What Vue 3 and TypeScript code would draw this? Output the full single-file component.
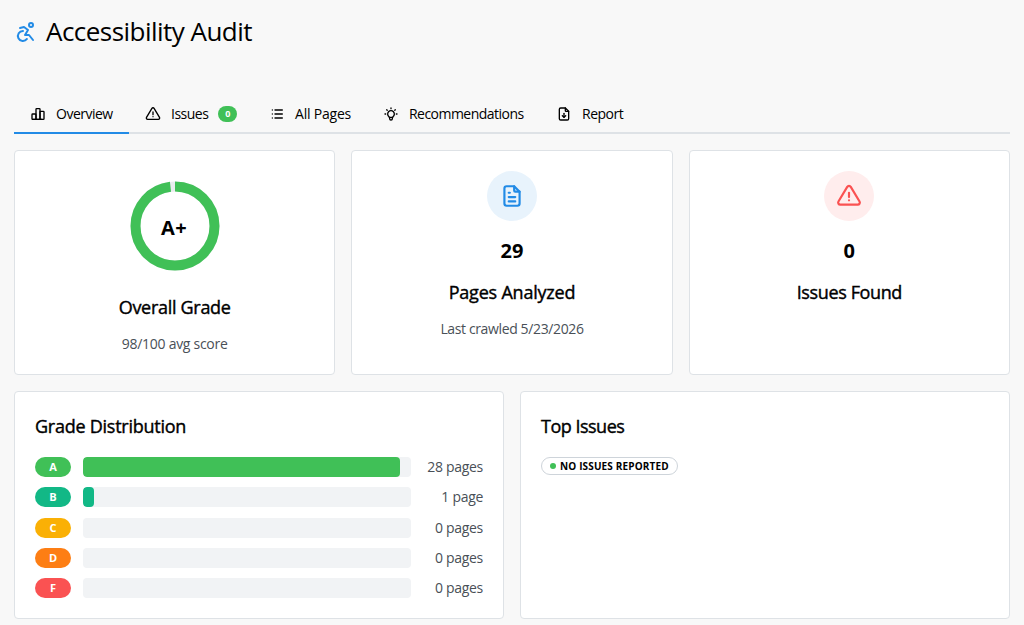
<script setup lang="ts">
interface Tab {
  key: string
  label: string
  paths: string[]
  badge?: string
}

interface GradeRow {
  grade: string
  percent: number
  count: string
}

const alertPaths = [
  'M12 9v4',
  'M10.363 3.591l-8.106 13.534a1.914 1.914 0 0 0 1.636 2.871h16.214a1.914 1.914 0 0 0 1.636 -2.87l-8.106 -13.536a1.914 1.914 0 0 0 -3.274 0z',
  'M12 16h.01',
]
const filePaths = [
  'M14 3v4a1 1 0 0 0 1 1h4',
  'M17 21h-10a2 2 0 0 1 -2 -2v-14a2 2 0 0 1 2 -2h7l5 5v11a2 2 0 0 1 -2 2z',
]

const tabs: Tab[] = [
  {
    key: 'overview',
    label: 'Overview',
    paths: [
      'M3 13a1 1 0 0 1 1 -1h4a1 1 0 0 1 1 1v6a1 1 0 0 1 -1 1h-4a1 1 0 0 1 -1 -1z',
      'M15 9a1 1 0 0 1 1 -1h4a1 1 0 0 1 1 1v10a1 1 0 0 1 -1 1h-4a1 1 0 0 1 -1 -1z',
      'M9 5a1 1 0 0 1 1 -1h4a1 1 0 0 1 1 1v14a1 1 0 0 1 -1 1h-4a1 1 0 0 1 -1 -1z',
      'M4 20h14',
    ],
  },
  { key: 'issues', label: 'Issues', paths: alertPaths, badge: '0' },
  {
    key: 'pages',
    label: 'All Pages',
    paths: ['M9 6h11', 'M9 12h11', 'M9 18h11', 'M5 6v.01', 'M5 12v.01', 'M5 18v.01'],
  },
  {
    key: 'recommendations',
    label: 'Recommendations',
    paths: [
      'M3 12h1m8 -9v1m8 8h1m-15.4 -6.4l.7 .7m12.1 -.7l-.7 .7',
      'M9 16a5 5 0 1 1 6 0a3.5 3.5 0 0 0 -1 3a2 2 0 0 1 -4 0a3.5 3.5 0 0 0 -1 -3',
      'M9.7 17h4.6',
    ],
  },
  { key: 'report', label: 'Report', paths: [...filePaths, 'M12 17v-6', 'M9.5 14.5l2.5 2.5l2.5 -2.5'] },
]
const activeTab = 'overview'

const score = 98
const radius = 39.5
const circumference = 2 * Math.PI * radius
const scoreLength = (circumference * score) / 100

const grades: GradeRow[] = [
  { grade: 'A', percent: 96.55, count: '28 pages' },
  { grade: 'B', percent: 3.45, count: '1 page' },
  { grade: 'C', percent: 0, count: '0 pages' },
  { grade: 'D', percent: 0, count: '0 pages' },
  { grade: 'F', percent: 0, count: '0 pages' },
]
</script>

<template>
  <main class="page">
    <header class="header">
      <svg class="icon logo" viewBox="0 0 24 24">
        <circle cx="17" cy="5" r="2" />
        <path d="M9 11a5 5 0 1 0 3.95 7.95" />
        <path d="M19 20l-4 -5h-4l3 -5l-4 -3l-4 1" />
      </svg>
      <h1 class="title">Accessibility Audit</h1>
    </header>

    <nav class="tabs">
      <button
        v-for="tab in tabs"
        :key="tab.key"
        type="button"
        class="tab"
        :class="[`tab-${tab.key}`, { active: tab.key === activeTab }]"
      >
        <svg class="icon" viewBox="0 0 24 24">
          <path v-for="d in tab.paths" :key="d" :d="d" />
        </svg>
        <span class="tab-label">{{ tab.label }}</span>
        <span v-if="tab.badge" class="tab-badge">{{ tab.badge }}</span>
      </button>
    </nav>

    <section class="stats">
      <article class="card stat">
        <div class="ring">
          <svg viewBox="0 0 100 100">
            <circle class="ring-track" cx="50" cy="50" :r="radius" />
            <circle
              class="ring-value"
              cx="50"
              cy="50"
              :r="radius"
              transform="rotate(-90 50 50)"
              :stroke-dasharray="`${scoreLength} ${circumference}`"
            />
          </svg>
          <span class="ring-label">A+</span>
        </div>
        <h2 class="stat-name">Overall Grade</h2>
        <p class="stat-note">98/100 avg score</p>
      </article>

      <article class="card stat">
        <div class="bubble blue">
          <svg class="icon" viewBox="0 0 24 24">
            <path v-for="d in filePaths" :key="d" :d="d" />
            <path d="M9 9h1" />
            <path d="M9 13h6" />
            <path d="M9 17h6" />
          </svg>
        </div>
        <strong class="stat-value">29</strong>
        <h2 class="stat-name analyzed">Pages Analyzed</h2>
        <p class="stat-note crawled">Last crawled 5/23/2026</p>
      </article>

      <article class="card stat">
        <div class="bubble red">
          <svg class="icon" viewBox="0 0 24 24">
            <path v-for="d in alertPaths" :key="d" :d="d" />
          </svg>
        </div>
        <strong class="stat-value">0</strong>
        <h2 class="stat-name found">Issues Found</h2>
      </article>
    </section>

    <section class="details">
      <article class="card panel">
        <h2 class="panel-title">Grade Distribution</h2>
        <ul class="grades">
          <li v-for="row in grades" :key="row.grade" class="grade-row" :class="`grade-${row.grade}`">
            <span class="grade-badge">{{ row.grade }}</span>
            <span class="bar"><span class="bar-fill" :style="{ width: `${row.percent}%` }" /></span>
            <span class="count">{{ row.count }}</span>
          </li>
        </ul>
      </article>

      <article class="card panel">
        <h2 class="panel-title top">Top Issues</h2>
        <span class="status"><i class="dot" /><span>No issues reported</span></span>
      </article>
    </section>
  </main>
</template>

<style>
body {
  margin: 0;
  background: #f8f8f8;
}
</style>

<style scoped>
.page {
  box-sizing: border-box;
  height: 625px;
  padding: 14px 14px 0;
  overflow: hidden;
  background: #f8f8f8;
  color: #000;
  font-family: 'Open Sans', 'Noto Sans', sans-serif;
}
h1,
h2,
p,
ul {
  margin: 0;
  padding: 0;
}
.icon {
  flex: none;
  fill: none;
  stroke: currentColor;
  stroke-width: 2;
  stroke-linecap: round;
  stroke-linejoin: round;
}
.header {
  display: flex;
  align-items: center;
  height: 36px;
}
.logo {
  width: 24px;
  height: 24px;
  margin-right: 8px;
  color: #228be6;
}
.title {
  font-size: 26px;
  line-height: 34px;
  height: 36px;
  font-weight: 400;
  letter-spacing: -0.53px;
  white-space: nowrap;
}
.tabs {
  display: flex;
  height: 38px;
  margin-top: 44px;
  border-bottom: 2px solid #dee2e6;
}
.tab {
  display: flex;
  align-items: center;
  box-sizing: border-box;
  height: 40px;
  padding: 2px 0 0 16px;
  border: 0;
  border-bottom: 2px solid transparent;
  background: none;
  color: #000;
  font: 400 14px/20px 'Open Sans', 'Noto Sans', sans-serif;
  white-space: nowrap;
}
.tab .icon {
  width: 16px;
  height: 16px;
  margin-right: 10px;
}
.tab.active {
  border-bottom-color: #228be6;
}
.tab-overview { width: 115px; letter-spacing: -0.5px; }
.tab-issues { width: 124px; letter-spacing: -0.5px; }
.tab-pages { width: 114px; letter-spacing: -0.2px; }
.tab-recommendations { width: 173px; letter-spacing: -0.53px; }
.tab-report { width: 99px; letter-spacing: -0.5px; }
.tab-badge {
  width: 19px;
  height: 16px;
  margin-left: 10px;
  border-radius: 8px;
  background: #40c057;
  color: #fff;
  font-size: 9px;
  line-height: 16px;
  font-weight: 700;
  letter-spacing: 0;
  text-align: center;
}
.stats {
  display: grid;
  grid-template-columns: repeat(3, 1fr);
  gap: 16px;
  height: 225px;
  margin-top: 16px;
}
.details {
  display: grid;
  grid-template-columns: repeat(2, 1fr);
  gap: 16px;
  height: 228px;
  margin-top: 16px;
}
.card {
  box-sizing: border-box;
  padding: 20px;
  border: 1px solid #dee2e6;
  border-radius: 4px;
  background: #fff;
}
.stat {
  display: flex;
  flex-direction: column;
  align-items: center;
}
.ring {
  display: grid;
  place-items: center;
  width: 100px;
  height: 100px;
  margin: 5px 0 17px;
}
.ring > * {
  grid-area: 1 / 1;
}
.ring svg {
  width: 100px;
  height: 100px;
  fill: none;
  stroke-width: 10;
}
.ring-track {
  stroke: #e9ecef;
}
.ring-value {
  stroke: #40c057;
}
.ring-label {
  padding: 3px 1px 0 0;
  font-size: 20px;
  line-height: 28px;
  font-weight: 700;
  letter-spacing: 0.6px;
}
.bubble {
  display: grid;
  place-items: center;
  width: 50px;
  height: 50px;
  border-radius: 50%;
}
.bubble .icon {
  width: 26px;
  height: 26px;
}
.blue {
  background: #e8f3fc;
  color: #228be6;
}
.red {
  background: #ffeded;
  color: #fa5252;
}
.stat-value {
  margin: 15px 0 13px;
  font-size: 20px;
  line-height: 29px;
  font-weight: 700;
}
.stat-name,
.panel-title {
  font-size: 18px;
  line-height: 28px;
  font-weight: 500;
  -webkit-text-stroke: 0.4px currentColor;
  white-space: nowrap;
}
.stat-name {
  letter-spacing: -0.3px;
}
.analyzed {
  letter-spacing: -0.2px;
}
.found {
  letter-spacing: -0.38px;
}
.stat-note {
  margin-top: 13px;
  color: #495057;
  font-size: 14px;
  line-height: 20px;
  letter-spacing: -0.28px;
  white-space: nowrap;
}
.crawled {
  letter-spacing: -0.37px;
}
.panel-title {
  height: 28px;
  letter-spacing: -0.25px;
}
.top {
  letter-spacing: -0.5px;
}
.grades {
  list-style: none;
  margin-top: 17px;
}
.grade-row {
  display: flex;
  align-items: center;
  height: 20px;
  margin-bottom: 10.25px;
}
.grade-row:last-child {
  margin-bottom: 0;
}
.grade-badge {
  width: 36px;
  height: 20px;
  margin-right: 12px;
  border-radius: 10px;
  background: var(--grade);
  color: #fff;
  font-size: 11px;
  line-height: 20px;
  font-weight: 700;
  text-align: center;
}
.bar {
  flex: 1;
  height: 20px;
  overflow: hidden;
  border-radius: 4px;
  background: #f1f3f5;
}
.bar-fill {
  display: block;
  height: 100%;
  border-radius: 4px;
  background: var(--grade);
}
.count {
  width: 72px;
  color: #495057;
  font-size: 14px;
  line-height: 20px;
  letter-spacing: -0.3px;
  text-align: right;
  white-space: nowrap;
}
.grade-A { --grade: #40c057; }
.grade-B { --grade: #12b886; }
.grade-C { --grade: #fab005; }
.grade-D { --grade: #fd7e14; }
.grade-F { --grade: #fa5252; }
.status {
  display: flex;
  align-items: center;
  box-sizing: border-box;
  width: 137px;
  height: 18px;
  margin-top: 17px;
  padding-left: 8px;
  border: 1px solid #ced4da;
  border-radius: 9px;
  font-size: 10px;
  line-height: 16px;
  font-weight: 700;
  letter-spacing: 0.15px;
  text-transform: uppercase;
  white-space: nowrap;
}
.dot {
  width: 6px;
  height: 6px;
  margin-right: 4px;
  border-radius: 50%;
  background: #40c057;
}
</style>
